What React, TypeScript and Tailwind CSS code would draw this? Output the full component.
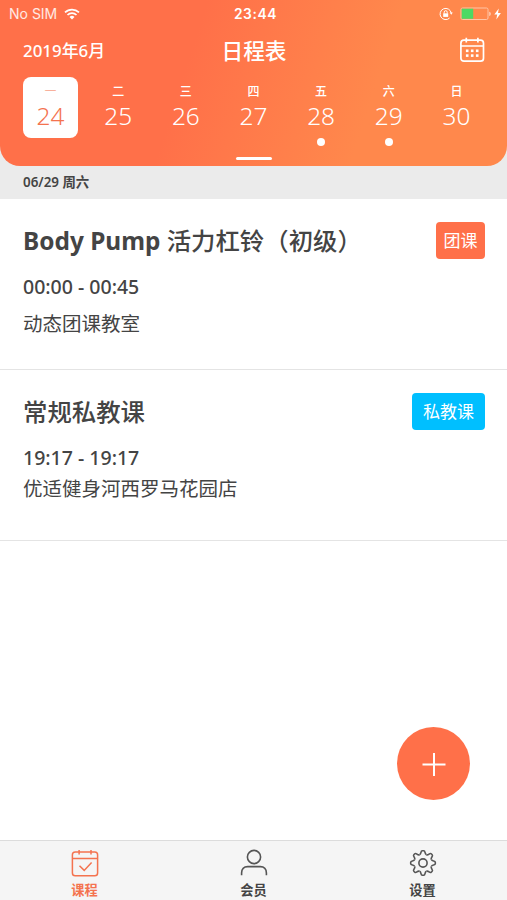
import { ReactNode } from 'react';
import clsx from 'clsx';

interface Day {
  label: string;
  date: number;
  active?: boolean;
  hasCourse?: boolean;
}

interface Course {
  title: string;
  time: string;
  place: string;
  tag: string;
  tagClass: string;
  placeClass: string;
}

const days: Day[] = [
  { label: '一', date: 24, active: true },
  { label: '二', date: 25 },
  { label: '三', date: 26 },
  { label: '四', date: 27 },
  { label: '五', date: 28, hasCourse: true },
  { label: '六', date: 29, hasCourse: true },
  { label: '日', date: 30 },
];

const courses: Course[] = [
  {
    title: 'Body Pump 活力杠铃（初级）',
    time: '00:00 - 00:45',
    place: '动态团课教室',
    tag: '团课',
    tagClass: 'w-[49px] bg-[#ff7049]',
    placeClass: 'mt-[9px]',
  },
  {
    title: '常规私教课',
    time: '19:17 - 19:17',
    place: '优适健身河西罗马花园店',
    tag: '私教课',
    tagClass: 'w-[73px] bg-[#00bfff]',
    placeClass: 'mt-[3px]',
  },
];

const gearAngles = [0, 45, 90, 135, 180, 225, 270, 315];

const StatusBar = () => (
  <div className="grid h-7 grid-cols-3 items-center pl-[9px] pr-[5px] font-['Inter',sans-serif] text-white">
    <div className="flex items-center gap-[7px]">
      <span className="text-[14px] leading-none text-white/85">No SIM</span>
      <svg width="16" height="12" viewBox="0 0 16 12" fill="none" stroke="currentColor" strokeWidth="1.7">
        <path d="M1 4.4a10 10 0 0 1 14 0" />
        <path d="M3.5 7a6.4 6.4 0 0 1 9 0" />
        <path d="M8 11.4 5.5 8.9a3.6 3.6 0 0 1 5 0Z" fill="currentColor" stroke="none" />
      </svg>
    </div>
    <span className="pt-px text-center text-[13.8px] font-semibold leading-none tracking-[0.6px]">23:44</span>
    <div className="flex items-center justify-end">
      <svg width="14" height="14" viewBox="0 0 14 14" fill="none" stroke="currentColor" strokeWidth="1">
        <path d="M12.2 6A5.6 5.6 0 1 0 10.6 11" />
        <path d="m10.6 5.6 1.7 2.2 1.5-2.2Z" fill="currentColor" stroke="none" />
        <rect x="4.2" y="6.3" width="5" height="3.6" fill="currentColor" stroke="none" />
        <path d="M5.2 6.5V5.2a1.5 1.5 0 0 1 3 0v1.3" />
      </svg>
      <svg className="ml-[7px]" width="42" height="14" viewBox="0 0 42 14" fill="none">
        <rect x="1" y="1" width="27" height="11.5" rx="1.5" stroke="#ffc4a6" />
        <rect x="1.7" y="1.7" width="11.5" height="10.1" fill="#4cd964" />
        <path d="M29.3 4.8c1.9.4 1.9 3.8 0 4.2Z" fill="#ffd9c6" />
        <path d="m38.8 1.4-4.5 6.2h2.9l-.9 5 4.6-6.6H38Z" fill="#fff" />
      </svg>
    </div>
  </div>
);

const CalendarIcon = () => (
  <svg width="26" height="26" viewBox="0 0 26 26" fill="none" stroke="currentColor" strokeWidth="1.7">
    <rect x="1.9" y="3.2" width="22.6" height="21" rx="3" />
    <path d="M1.9 9h22.6M7.3.8v4.6M18.9.8v4.6" />
    <g fill="currentColor" stroke="none">
      <rect x="6.9" y="12.5" width="2.6" height="2.6" />
      <rect x="11.9" y="12.5" width="2.6" height="2.6" />
      <rect x="16.9" y="12.5" width="2.6" height="2.6" />
      <rect x="6.9" y="17.3" width="2.6" height="2.6" />
      <rect x="11.9" y="17.3" width="2.6" height="2.6" />
      <rect x="16.9" y="17.3" width="2.6" height="2.6" />
    </g>
  </svg>
);

const CourseIcon = () => (
  <svg width="28" height="28" viewBox="0 0 28 28" fill="none" stroke="currentColor" strokeWidth="1.5">
    <rect x="1.4" y="2.9" width="25.2" height="23.8" rx="2.8" />
    <path d="M1.4 9.4h25.2M8.1.9v4.6M20 .9v4.6" />
    <path d="m8.5 16.8 4.7 4.6 7.4-8" />
  </svg>
);

const MemberIcon = () => (
  <svg width="28" height="28" viewBox="0 0 28 28" fill="none" stroke="currentColor" strokeWidth="1.6">
    <circle cx="14" cy="8" r="6.6" />
    <path d="M1.6 26.3v-2.4c0-3.6 2.3-6.3 6-6.3h12.8c3.7 0 6 2.7 6 6.3v2.4" />
  </svg>
);

const GearIcon = () => (
  <svg width="28" height="28" viewBox="-14 -14 28 28" fill="none" stroke="currentColor" strokeWidth="1.6">
    {gearAngles.map((angle) => (
      <path
        key={angle}
        transform={`rotate(${angle})`}
        d="M-3.44-8.32C-2.3-8.8-2.2-9.5-2-10.6-1.8-11.8-1.4-12.3-.7-12.3H.7C1.4-12.3 1.8-11.8 2-10.6 2.2-9.5 2.3-8.8 3.44-8.32"
      />
    ))}
    <circle r="4.1" />
  </svg>
);

const DayCell = ({ label, date, active, hasCourse }: Day) => (
  <div
    className={clsx(
      'flex h-[61px] w-[55px] flex-col items-center rounded-lg',
      active ? 'bg-white text-[#f4734f]' : 'text-white'
    )}
  >
    <span className={clsx('mt-[7px] text-[12px] leading-4', active ? 'font-light' : 'font-medium')}>{label}</span>
    <span className="mt-[2px] text-[24.4px] font-[350] leading-7">{date}</span>
    {hasCourse && <span className="mt-[8px] h-2 w-2 shrink-0 rounded-full bg-white" />}
  </div>
);

const CourseCard = ({ title, time, place, tag, tagClass, placeClass }: Course) => (
  <div className="flex h-[171px] items-start justify-between border-b border-[#e4e4e4] pl-[23px] pr-[22px] pt-[23px] text-[#444]">
    <div>
      <h2 className="text-[24.4px] font-bold leading-[38px]">
        {title.startsWith('Body Pump') ? (
          <>
            Body Pump <span className="font-medium">{title.slice(10)}</span>
          </>
        ) : (
          <span className="font-medium">{title}</span>
        )}
      </h2>
      <p className="mt-[13px] text-[19.5px] font-medium leading-7">{time}</p>
      <p className={clsx('text-[19.5px] leading-7', placeClass)}>{place}</p>
    </div>
    <span className={clsx('flex h-[37px] items-center justify-center rounded-[4px] text-[17px] text-white', tagClass)}>
      {tag}
    </span>
  </div>
);

const TabItem = ({ icon, label, active }: { icon: ReactNode; label: string; active?: boolean }) => (
  <div className={clsx('flex flex-1 flex-col items-center pt-[8px]', active ? 'text-[#f4734f]' : 'text-[#555]')}>
    {icon}
    <span className={clsx('mt-[4px] text-[13.2px] font-bold leading-[18px]', !active && 'text-[#444]')}>{label}</span>
  </div>
);

const App = () => {
  return (
    <div className="relative flex h-[900px] w-[507px] flex-col overflow-hidden bg-white font-['Noto_Sans','Noto_Sans_CJK_SC',sans-serif]">
      <div className="bg-[#ebebeb]">
        <header className="flex h-[166px] flex-col rounded-b-[20px] bg-[linear-gradient(108deg,#ff7049_0%,#ff7049_37%,#ff884c_72%,#ff884c_100%)]">
          <StatusBar />
          <div className="mb-[3px] grid h-[46px] grid-cols-3 items-center pl-[23px] pr-[22px] text-white">
            <span className="text-[16.9px] font-medium">2019年6月</span>
            <h1 className="text-center text-[21.7px] font-medium">日程表</h1>
            <div className="flex justify-end pb-0.5">
              <CalendarIcon />
            </div>
          </div>
          <div className="flex justify-between pl-[23px] pr-[23px]">
            {days.map((day) => (
              <DayCell key={day.date} {...day} />
            ))}
          </div>
          <div className="mt-[19px] h-[3px] w-9 self-center rounded-full bg-white" />
        </header>
        <div className="h-[33px] pl-[23px] text-[13.4px] font-semibold leading-[33px] text-[#444]">06/29 周六</div>
      </div>

      <main className="flex-1">
        {courses.map((course) => (
          <CourseCard key={course.title} {...course} />
        ))}
      </main>

      {/* Floating add button */}
      <button className="absolute bottom-[100px] right-[37px] flex h-[73px] w-[73px] items-center justify-center rounded-full bg-[#ff7049]">
        <svg width="24" height="24" viewBox="0 0 24 24" stroke="#fff" strokeWidth="2">
          <path d="M12 1v23M.5 12.5h23" />
        </svg>
      </button>

      <nav className="flex h-[60px] border-t border-[#dcdcdc] bg-[#f5f5f5]">
        <TabItem icon={<CourseIcon />} label="课程" active />
        <TabItem icon={<MemberIcon />} label="会员" />
        <TabItem icon={<GearIcon />} label="设置" />
      </nav>
    </div>
  );
};

export default App;
